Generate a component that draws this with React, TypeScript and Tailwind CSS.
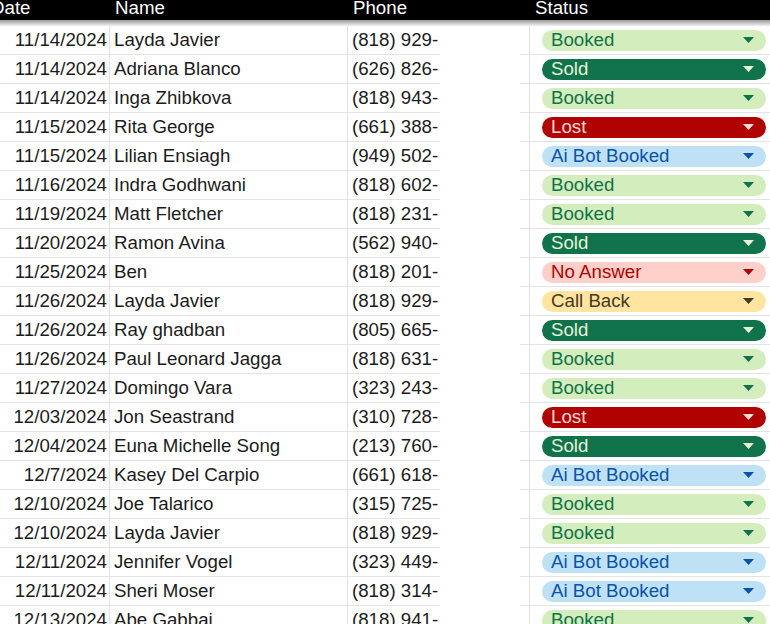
type Status = 'Booked' | 'Sold' | 'Lost' | 'Ai Bot Booked' | 'No Answer' | 'Call Back';

interface Lead {
  date: string;
  name: string;
  phone: string;
  status: Status;
}

const leads: Lead[] = [
  { date: '11/14/2024', name: 'Layda Javier', phone: '(818) 929-', status: 'Booked' },
  { date: '11/14/2024', name: 'Adriana Blanco', phone: '(626) 826-', status: 'Sold' },
  { date: '11/14/2024', name: 'Inga Zhibkova', phone: '(818) 943-', status: 'Booked' },
  { date: '11/15/2024', name: 'Rita George', phone: '(661) 388-', status: 'Lost' },
  { date: '11/15/2024', name: 'Lilian Ensiagh', phone: '(949) 502-', status: 'Ai Bot Booked' },
  { date: '11/16/2024', name: 'Indra Godhwani', phone: '(818) 602-', status: 'Booked' },
  { date: '11/19/2024', name: 'Matt Fletcher', phone: '(818) 231-', status: 'Booked' },
  { date: '11/20/2024', name: 'Ramon Avina', phone: '(562) 940-', status: 'Sold' },
  { date: '11/25/2024', name: 'Ben', phone: '(818) 201-', status: 'No Answer' },
  { date: '11/26/2024', name: 'Layda Javier', phone: '(818) 929-', status: 'Call Back' },
  { date: '11/26/2024', name: 'Ray ghadban', phone: '(805) 665-', status: 'Sold' },
  { date: '11/26/2024', name: 'Paul Leonard Jagga', phone: '(818) 631-', status: 'Booked' },
  { date: '11/27/2024', name: 'Domingo Vara', phone: '(323) 243-', status: 'Booked' },
  { date: '12/03/2024', name: 'Jon Seastrand', phone: '(310) 728-', status: 'Lost' },
  { date: '12/04/2024', name: 'Euna Michelle Song', phone: '(213) 760-', status: 'Sold' },
  { date: '12/7/2024', name: 'Kasey Del Carpio', phone: '(661) 618-', status: 'Ai Bot Booked' },
  { date: '12/10/2024', name: 'Joe Talarico', phone: '(315) 725-', status: 'Booked' },
  { date: '12/10/2024', name: 'Layda Javier', phone: '(818) 929-', status: 'Booked' },
  { date: '12/11/2024', name: 'Jennifer Vogel', phone: '(323) 449-', status: 'Ai Bot Booked' },
  { date: '12/11/2024', name: 'Sheri Moser', phone: '(818) 314-', status: 'Ai Bot Booked' },
  { date: '12/13/2024', name: 'Abe Gabbai', phone: '(818) 941-', status: 'Booked' },
];

const chipStyles: Record<Status, { chip: string; arrow: string }> = {
  Booked: { chip: 'bg-[#d4edbc] text-[#11734b]', arrow: 'fill-[#11734b]' },
  Sold: { chip: 'bg-[#11734b] text-[#e6f4da]', arrow: 'fill-[#e6f4da]' },
  Lost: { chip: 'bg-[#b10202] text-[#ffdcd6]', arrow: 'fill-[#ffdcd6]' },
  'Ai Bot Booked': { chip: 'bg-[#bfe1f6] text-[#0a53a8]', arrow: 'fill-[#0a53a8]' },
  'No Answer': { chip: 'bg-[#ffcfc9] text-[#b10202]', arrow: 'fill-[#b10202]' },
  'Call Back': { chip: 'bg-[#ffe5a0] text-[#473821]', arrow: 'fill-[#473821]' },
};

function StatusChip({ status }: { status: Status }) {
  const s = chipStyles[status];
  return (
    <div className={`flex h-[21px] w-[224px] items-center justify-between rounded-full pl-[9px] pr-[12px] ${s.chip}`}>
      <span className="leading-none">{status}</span>
      <svg width="11" height="6" viewBox="0 0 11 6" className={s.arrow}>
        <path d="M0 0h11L5.5 6z" />
      </svg>
    </div>
  );
}

export default function App() {
  return (
    <div
      className="h-[624px] w-[770px] overflow-hidden bg-white text-[18.7px] text-[#1c1c1c]"
      style={{ fontFamily: '"Liberation Sans", Arial, sans-serif' }}
    >
      {/* header row, top of the text is scrolled off */}
      <div className="flex h-[20px] items-center bg-black text-white leading-none">
        <div className="w-[119px] -ml-[9px] -mt-[4px]">Date</div>
        <div className="w-[238px] pl-[5px] -mt-[4px]">Name</div>
        <div className="w-[182px] pl-[5px] -mt-[4px]">Phone</div>
        <div className="pl-[5px] -mt-[4px]">Status</div>
      </div>
      <div className="h-[6px] bg-gradient-to-b from-[#9a9a9a] to-[#f2f2f2]" />
      {leads.map((lead, i) => (
        <div key={i} className="flex h-[29px]">
          <div className="flex w-[110px] items-center justify-end border-b border-r border-[#e3e3e3] pr-[2px]">
            {lead.date}
          </div>
          <div className="flex w-[238px] items-center border-b border-r border-[#e3e3e3] pl-[4px]">
            {lead.name}
          </div>
          <div className="flex w-[92px] items-center overflow-hidden whitespace-nowrap border-b border-[#e3e3e3] pl-[4px]">
            {lead.phone}
          </div>
          <div className="w-[80px]" />
          <div className="w-[10px] border-b border-r border-[#e3e3e3]" />
          <div className="flex flex-1 items-center border-b border-[#e3e3e3] pl-[12px]">
            <StatusChip status={lead.status} />
          </div>
        </div>
      ))}
    </div>
  );
}
